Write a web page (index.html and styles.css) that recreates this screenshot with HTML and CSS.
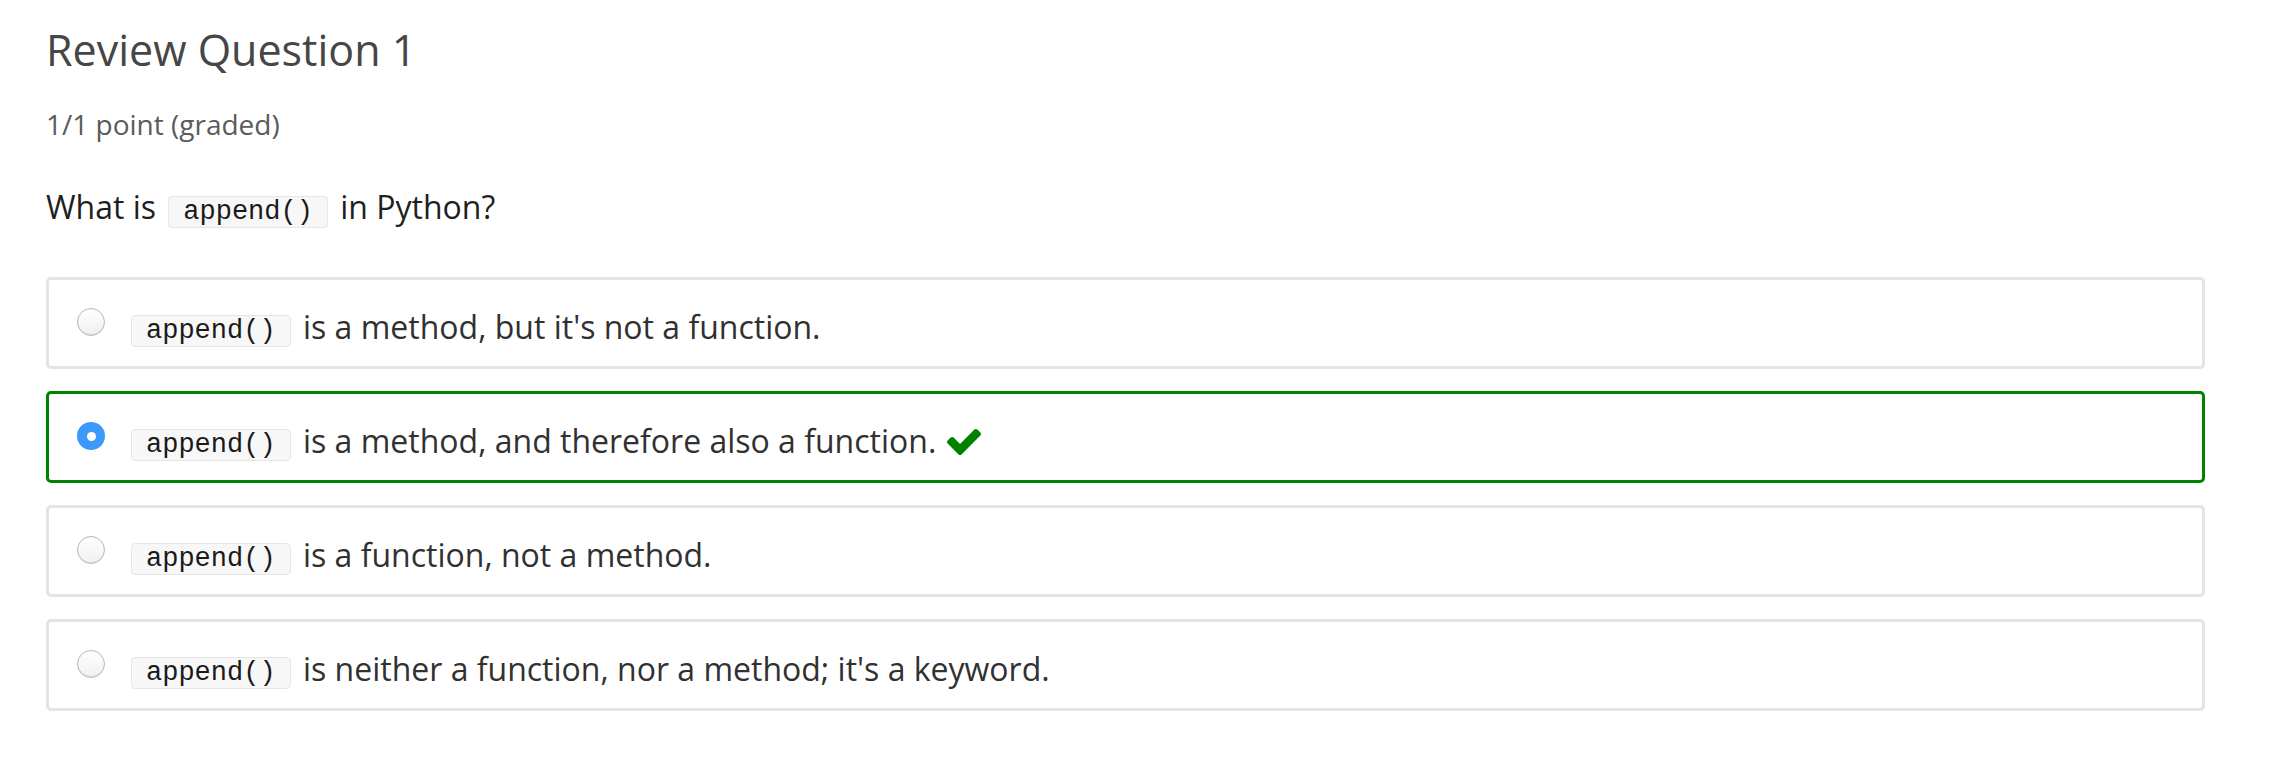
FILE: index.html
```html
<!DOCTYPE html>
<html lang="en">
<head>
<meta charset="utf-8">
<title>Review Question 1</title>
<link rel="stylesheet" href="styles.css">
</head>
<body>
<div class="problem">
  <h3 class="title">Review Question 1</h3>
  <div class="grade">1/1 point (graded)</div>
  <p class="question">What is <code>append()</code> in Python?</p>
  <div class="choices">
    <label class="choice">
      <span class="radio"></span>
      <span class="text"><code>append()</code> is a method, but it's not a function.</span>
    </label>
    <label class="choice correct">
      <span class="radio checked"></span>
      <span class="text"><code>append()</code> is a method, and therefore also a function. <svg class="check" viewBox="121 334 1550 1188" width="34" height="26" aria-hidden="true"><path fill="#008100" d="M1671 566q0 40-28 68l-724 724-136 136q-28 28-68 28t-68-28l-136-136-362-362q-28-28-28-68t28-68l136-136q28-28 68-28t68 28l294 295 656-657q28-28 68-28t68 28l136 136q28 28 28 68z"/></svg></span>
    </label>
    <label class="choice">
      <span class="radio"></span>
      <span class="text"><code>append()</code> is a function, not a method.</span>
    </label>
    <label class="choice">
      <span class="radio"></span>
      <span class="text"><code>append()</code> is neither a function, nor a method; it's a keyword.</span>
    </label>
  </div>
</div>
</body>
</html>
```

FILE: styles.css
```css
html, body {
  margin: 0;
  padding: 0;
  background: #ffffff;
}

body {
  font-family: "Open Sans", "Liberation Sans", sans-serif;
  color: #313131;
}

.problem {
  padding: 0 77px 0 46px;
}

.title {
  margin: 0;
  padding-top: 18px;
  font-size: 43px;
  font-weight: 400;
  line-height: 64px;
  color: #464646;
}

.grade {
  margin-top: 24px;
  font-size: 28px;
  line-height: 36px;
  color: #5b5b5b;
}

.question {
  margin: 43px 0 0;
  font-size: 32px;
  line-height: 44px;
  color: #1f1f1f;
}

code {
  display: inline-block;
  font-family: "Courier New", "Liberation Mono", monospace;
  font-size: 27px;
  line-height: 30px;
  padding: 0 14px;
  margin: 0 4px;
  background: #f7f7f7;
  border: 1px solid #e6e6e6;
  border-radius: 4px;
  color: #1a1a1a;
  vertical-align: 0;
}

.choices {
  margin-top: 48px;
  display: flex;
  flex-direction: column;
  gap: 22px;
}

.choice {
  display: flex;
  align-items: center;
  gap: 26px;
  height: 92px;
  box-sizing: border-box;
  padding: 0 28px;
  border: 3px solid #e4e4e4;
  border-radius: 5px;
  font-size: 32px;
  color: #313131;
}

.choice.correct {
  border-color: #008100;
}

.choice code {
  margin: 0 4px 0 0;
  vertical-align: 1px;
}

.radio {
  flex: none;
  width: 28px;
  height: 28px;
  box-sizing: border-box;
  border-radius: 50%;
  border: 1px solid #b8b8b8;
  background: linear-gradient(#ffffff, #f0f0f0);
  box-shadow: inset 0 -1px 1px rgba(0,0,0,0.08);
  margin-top: -2px;
}

.radio.checked {
  border: none;
  background: #3c99fc;
  box-shadow: none;
  display: flex;
  align-items: center;
  justify-content: center;
}

.radio.checked::after {
  content: "";
  width: 9px;
  height: 9px;
  border-radius: 50%;
  background: #ffffff;
}

.text {
  line-height: 44px;
  margin-top: 8px;
}

.check {
  vertical-align: -2px;
  margin-left: 2px;
}
```
